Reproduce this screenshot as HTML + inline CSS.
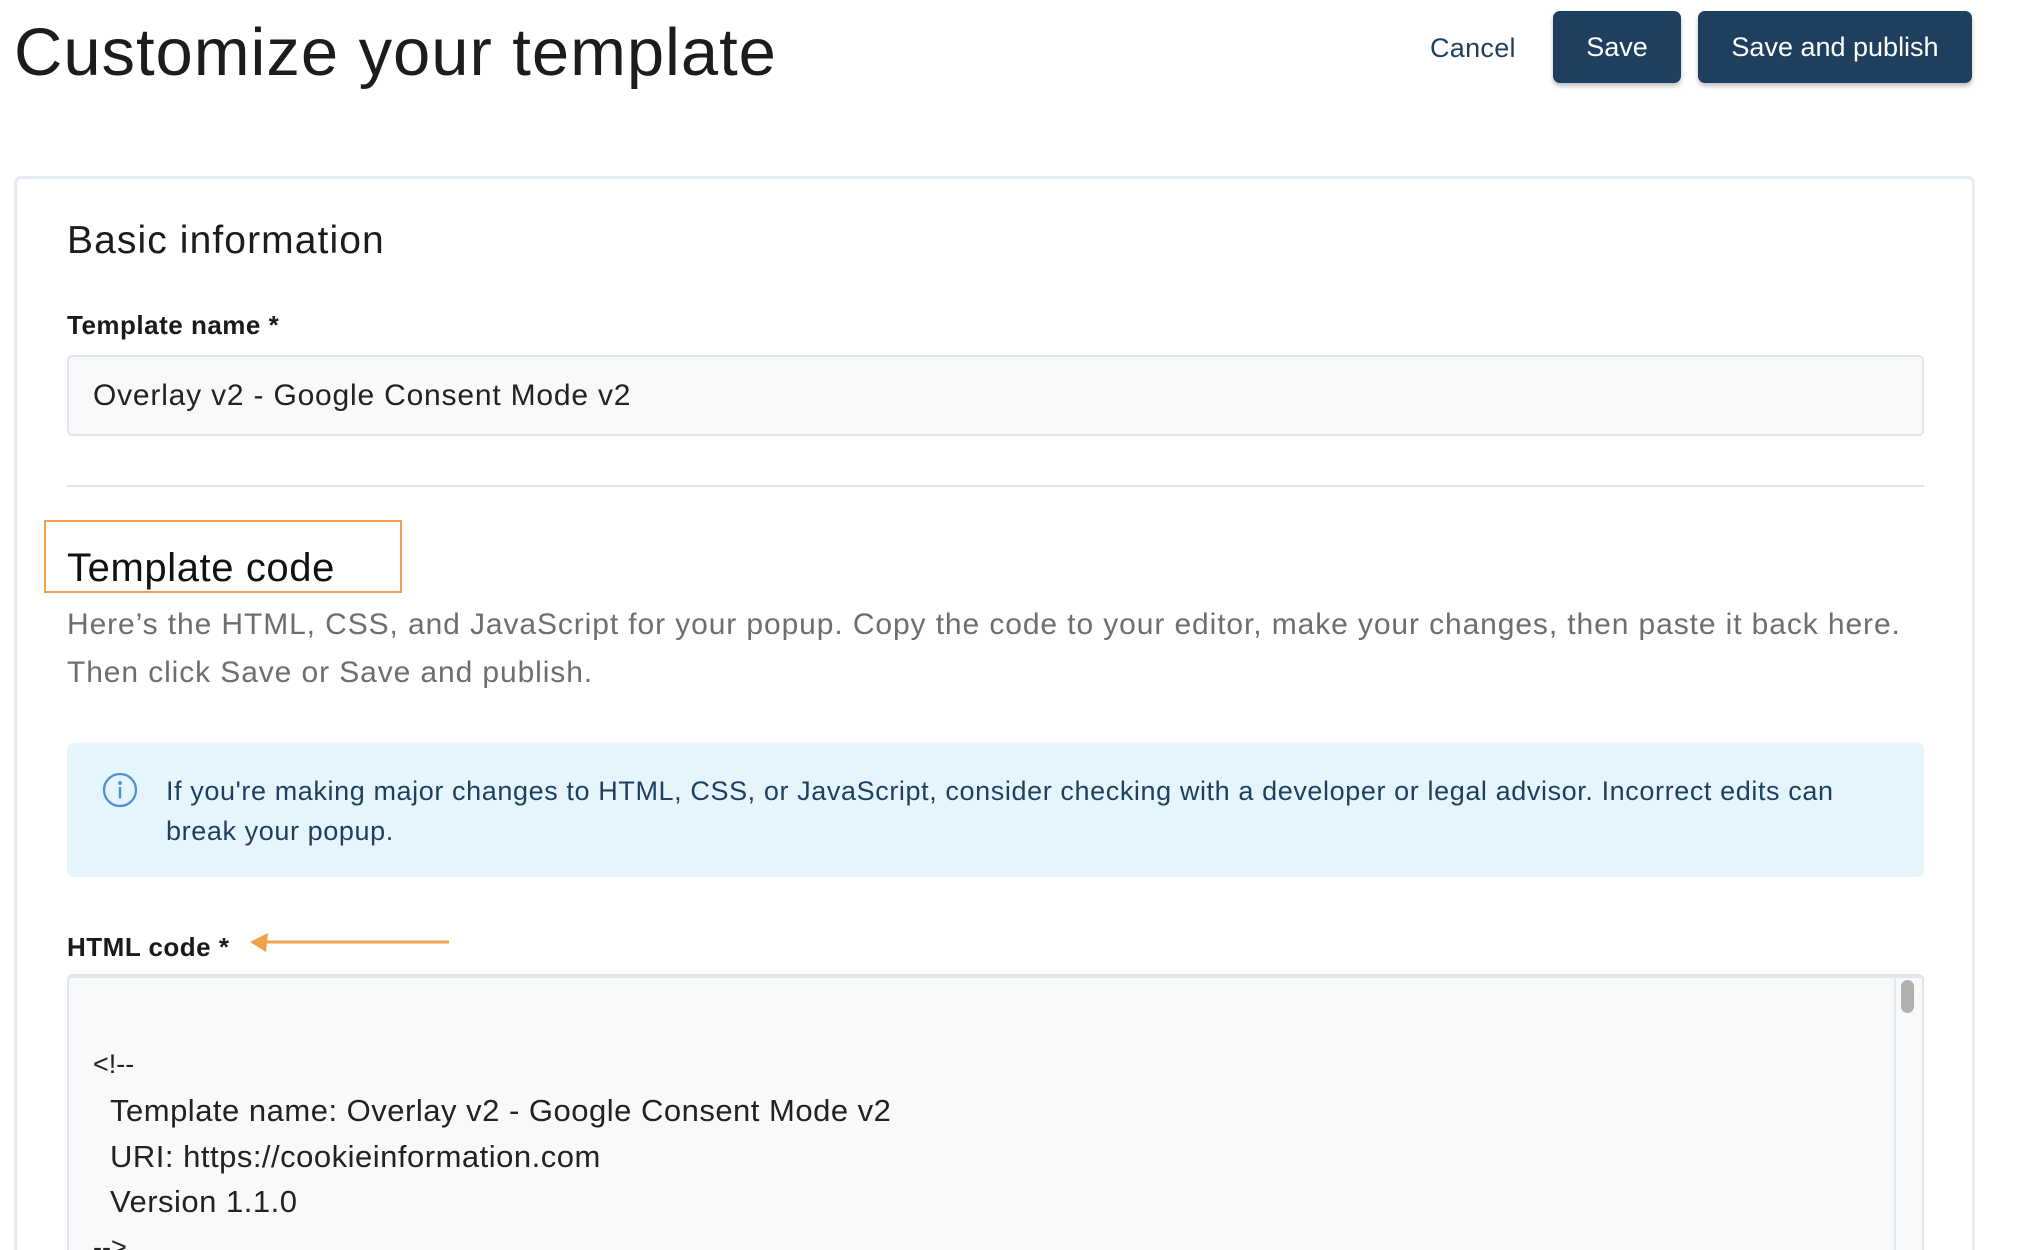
<!DOCTYPE html>
<html style="width:2026px;height:1250px;overflow:hidden"><head><meta charset="utf-8"><style>
*{margin:0;padding:0;box-sizing:border-box}
body{width:2026px;height:1250px;overflow:hidden;background:#fff;font-family:"Liberation Sans",Arial,sans-serif;position:relative;color:#1a1a1a}
.a{position:absolute;white-space:nowrap;line-height:1.2}
.btn{position:absolute;background:#1e3f5e;color:#fff;border-radius:7px;font-size:27px;display:flex;align-items:center;justify-content:center;box-shadow:0 3px 5px rgba(0,0,0,.25)}
</style></head><body>
<div class="a" style="left:14px;top:13px;font-size:67px;color:#1c1c1c;letter-spacing:0.95px">Customize your template</div>
<div class="a" style="left:1430px;top:32px;font-size:27px;color:#1e3f5e;letter-spacing:0.3px">Cancel</div>
<div class="btn" style="left:1553px;top:11px;width:128px;height:72px">Save</div>
<div class="btn" style="left:1698px;top:11px;width:274px;height:72px">Save and publish</div>

<div class="a" style="left:14px;top:176px;width:1961px;height:1074px;border:3px solid #e6ebf2;border-bottom:none;border-radius:7px 7px 0 0"></div>

<div class="a" style="left:67px;top:218px;font-size:39px;color:#1c1c1c;letter-spacing:1.1px">Basic information</div>
<div class="a" style="left:67px;top:310px;font-size:26px;font-weight:bold;letter-spacing:0.5px">Template name *</div>
<div class="a" style="left:67px;top:355px;width:1857px;height:81px;background:#f7f9fb;border:2px solid #e1e6ec;border-radius:5px"></div>
<div class="a" style="left:93px;top:378px;font-size:30px;color:#222;letter-spacing:0.8px">Overlay v2 - Google Consent Mode v2</div>
<div class="a" style="left:67px;top:485px;width:1857px;height:2px;background:#dfe2e6"></div>

<div class="a" style="left:44px;top:520px;width:358px;height:73px;border:2px solid #f0a24a"></div>
<div class="a" style="left:67px;top:544px;font-size:40px;color:#111;letter-spacing:0.6px">Template code</div>
<div class="a" style="left:67px;top:601px;font-size:30px;color:#6e6e6e;line-height:48px;letter-spacing:0.9px">Here’s the HTML, CSS, and JavaScript for your popup. Copy the code to your editor, make your changes, then paste it back here.<br>Then click Save or Save and publish.</div>

<div class="a" style="left:67px;top:743px;width:1857px;height:134px;background:#e6f4fc;border-radius:6px"></div>
<svg class="a" style="left:102px;top:772px" width="36" height="36" viewBox="0 0 36 36"><circle cx="18" cy="18" r="16" fill="none" stroke="#4a90d9" stroke-width="2.3"/><circle cx="18" cy="11" r="1.9" fill="#4a90d9"/><rect x="16.8" y="15" width="2.4" height="11.5" fill="#4a90d9"/></svg>
<div class="a" style="left:166px;top:771px;font-size:27px;color:#1e3f5e;line-height:40px;letter-spacing:0.6px">If you're making major changes to HTML, CSS, or JavaScript, consider checking with a developer or legal advisor. Incorrect edits can<br>break your popup.</div>

<div class="a" style="left:67px;top:932px;font-size:26px;font-weight:bold;letter-spacing:0.5px">HTML code *</div>
<svg class="a" style="left:248px;top:930px" width="204" height="26"><line x1="14" y1="12" x2="201" y2="12" stroke="#f0a24a" stroke-width="3"/><polygon points="2,12 20,3 18,22" fill="#f0a24a"/></svg>

<div class="a" style="left:67px;top:974px;width:1857px;height:276px;background:#f7f9fb;border:2px solid #e1e6ec;border-top-width:4px;border-bottom:none;border-radius:5px 5px 0 0"></div>
<div class="a" style="left:1894px;top:978px;width:2px;height:272px;background:#e4e7eb"></div>
<div class="a" style="left:1901px;top:980px;width:13px;height:33px;background:#b0b0b0;border-radius:7px"></div>
<div class="a" style="left:93px;top:1048px;font-size:27px;color:#222">&lt;!--</div>
<div class="a" style="left:110px;top:1088px;font-size:31px;color:#222;line-height:45.5px;letter-spacing:0.5px">Template name: Overlay v2 - Google Consent Mode v2<br>URI: https://cookieinformation.com<br>Version 1.1.0</div>
<div class="a" style="left:93px;top:1231px;font-size:27px;color:#222;height:19px;overflow:hidden">--&gt;</div>
</body></html>
